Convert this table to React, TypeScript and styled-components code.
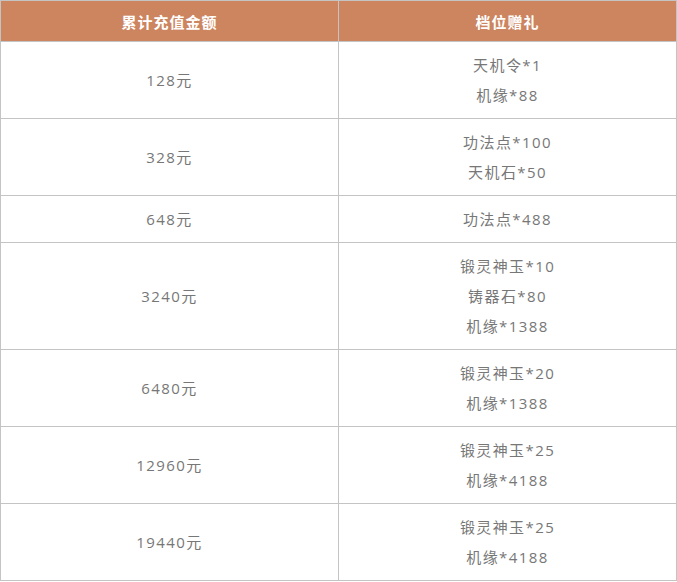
import React from 'react';
import styled, { createGlobalStyle } from 'styled-components';

const GlobalStyle = createGlobalStyle`
    html, body {
        margin: 0;
        padding: 0;
        background: #ffffff;
    }
`;

const Table = styled.table`
    width: 677px;
    border-collapse: collapse;
    table-layout: fixed;
    font-family: "Open Sans", "Noto Sans CJK SC", sans-serif;
    font-size: 15px;
    color: #777777;
`;

const HeadCell = styled.th`
    height: 40px;
    padding: 0;
    background: #cc855f;
    color: #ffffff;
    font-family: "Noto Sans CJK SC", sans-serif;
    font-weight: bold;
    font-size: 15px;
    text-align: center;
    border: 1px solid #c4c4c4;
    border-bottom: none;
    letter-spacing: 1px;
`;

const Cell = styled.td`
    padding: 8px 0;
    text-align: center;
    border: 1px solid #c4c4c4;
    line-height: 30px;
    letter-spacing: 1.4px;
`;

const Line = styled.div`
    white-space: nowrap;
`;

const tiers = [
    { amount: '128元', gifts: ['天机令*1', '机缘*88'] },
    { amount: '328元', gifts: ['功法点*100', '天机石*50'] },
    { amount: '648元', gifts: ['功法点*488'] },
    { amount: '3240元', gifts: ['锻灵神玉*10', '铸器石*80', '机缘*1388'] },
    { amount: '6480元', gifts: ['锻灵神玉*20', '机缘*1388'] },
    { amount: '12960元', gifts: ['锻灵神玉*25', '机缘*4188'] },
    { amount: '19440元', gifts: ['锻灵神玉*25', '机缘*4188'] },
];

const App = () => {
    return (
        <>
            <GlobalStyle />
            <Table>
                <colgroup>
                    <col style={{ width: '338px' }} />
                    <col />
                </colgroup>
                <thead>
                    <tr>
                        <HeadCell>累计充值金额</HeadCell>
                        <HeadCell>档位赠礼</HeadCell>
                    </tr>
                </thead>
                <tbody>
                    {tiers.map((t) => (
                        <tr key={t.amount}>
                            <Cell>{t.amount}</Cell>
                            <Cell>
                                {t.gifts.map((g) => (
                                    <Line key={g}>{g}</Line>
                                ))}
                            </Cell>
                        </tr>
                    ))}
                </tbody>
            </Table>
        </>
    );
};

export default App;
